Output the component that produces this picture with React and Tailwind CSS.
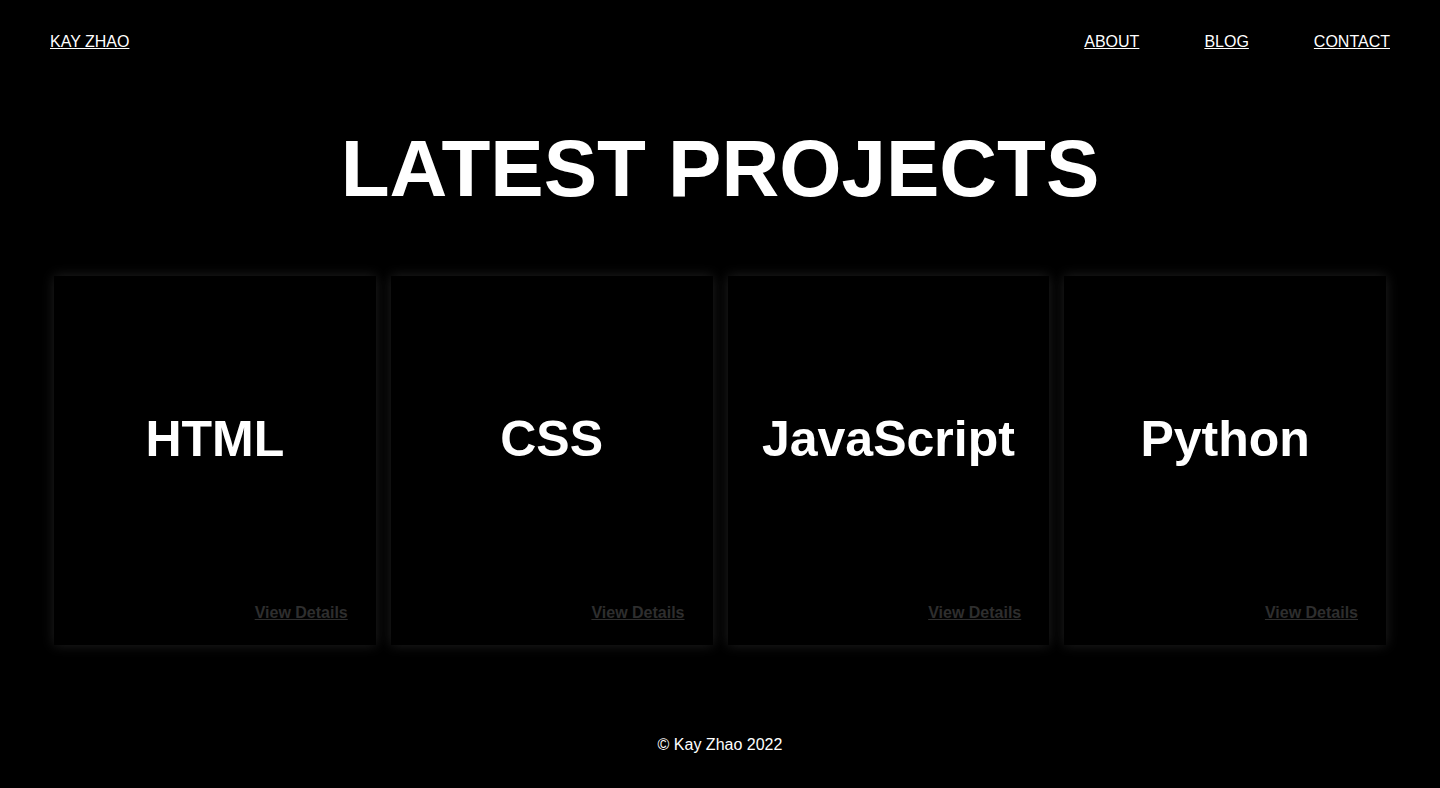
import React from 'react';

const projects = ['HTML', 'CSS', 'JavaScript', 'Python'];

const ProjectCard = ({ title }) => (
  <div className="flex h-[369px] flex-col bg-black shadow-[0_0_12px_rgba(255,255,255,0.13)]">
    <div className="flex flex-1 items-center justify-center">
      <h2 className="text-[50px] font-bold leading-none text-white">{title}</h2>
    </div>
    <div className="flex justify-end pb-[20px] pr-[28px]">
      <a href="#" className="text-base font-bold text-[#2e2e2e] underline">
        View Details
      </a>
    </div>
  </div>
);

const App = () => {
  return (
    <div
      className="min-h-[788px] bg-black text-white"
      style={{ fontFamily: '"Liberation Sans", Arial, sans-serif' }}
    >
      <header className="flex h-[84px] items-center justify-between px-[50px] text-base">
        <a href="#" className="underline">
          KAY ZHAO
        </a>
        <nav className="flex gap-[65px]">
          <a href="#" className="underline">
            ABOUT
          </a>
          <a href="#" className="underline">
            BLOG
          </a>
          <a href="#" className="underline">
            CONTACT
          </a>
        </nav>
      </header>

      <main>
        <h1 className="mt-[39px] text-center text-[80px] font-bold leading-[92px]">
          LATEST PROJECTS
        </h1>
        <section className="mt-[61px] grid grid-cols-4 gap-[15px] px-[54px]">
          {projects.map((p) => (
            <ProjectCard key={p} title={p} />
          ))}
        </section>
      </main>

      <footer className="mt-[91px] pb-[34px] text-center text-base leading-[18px]">
        © Kay Zhao 2022
      </footer>
    </div>
  );
};

export default App;
